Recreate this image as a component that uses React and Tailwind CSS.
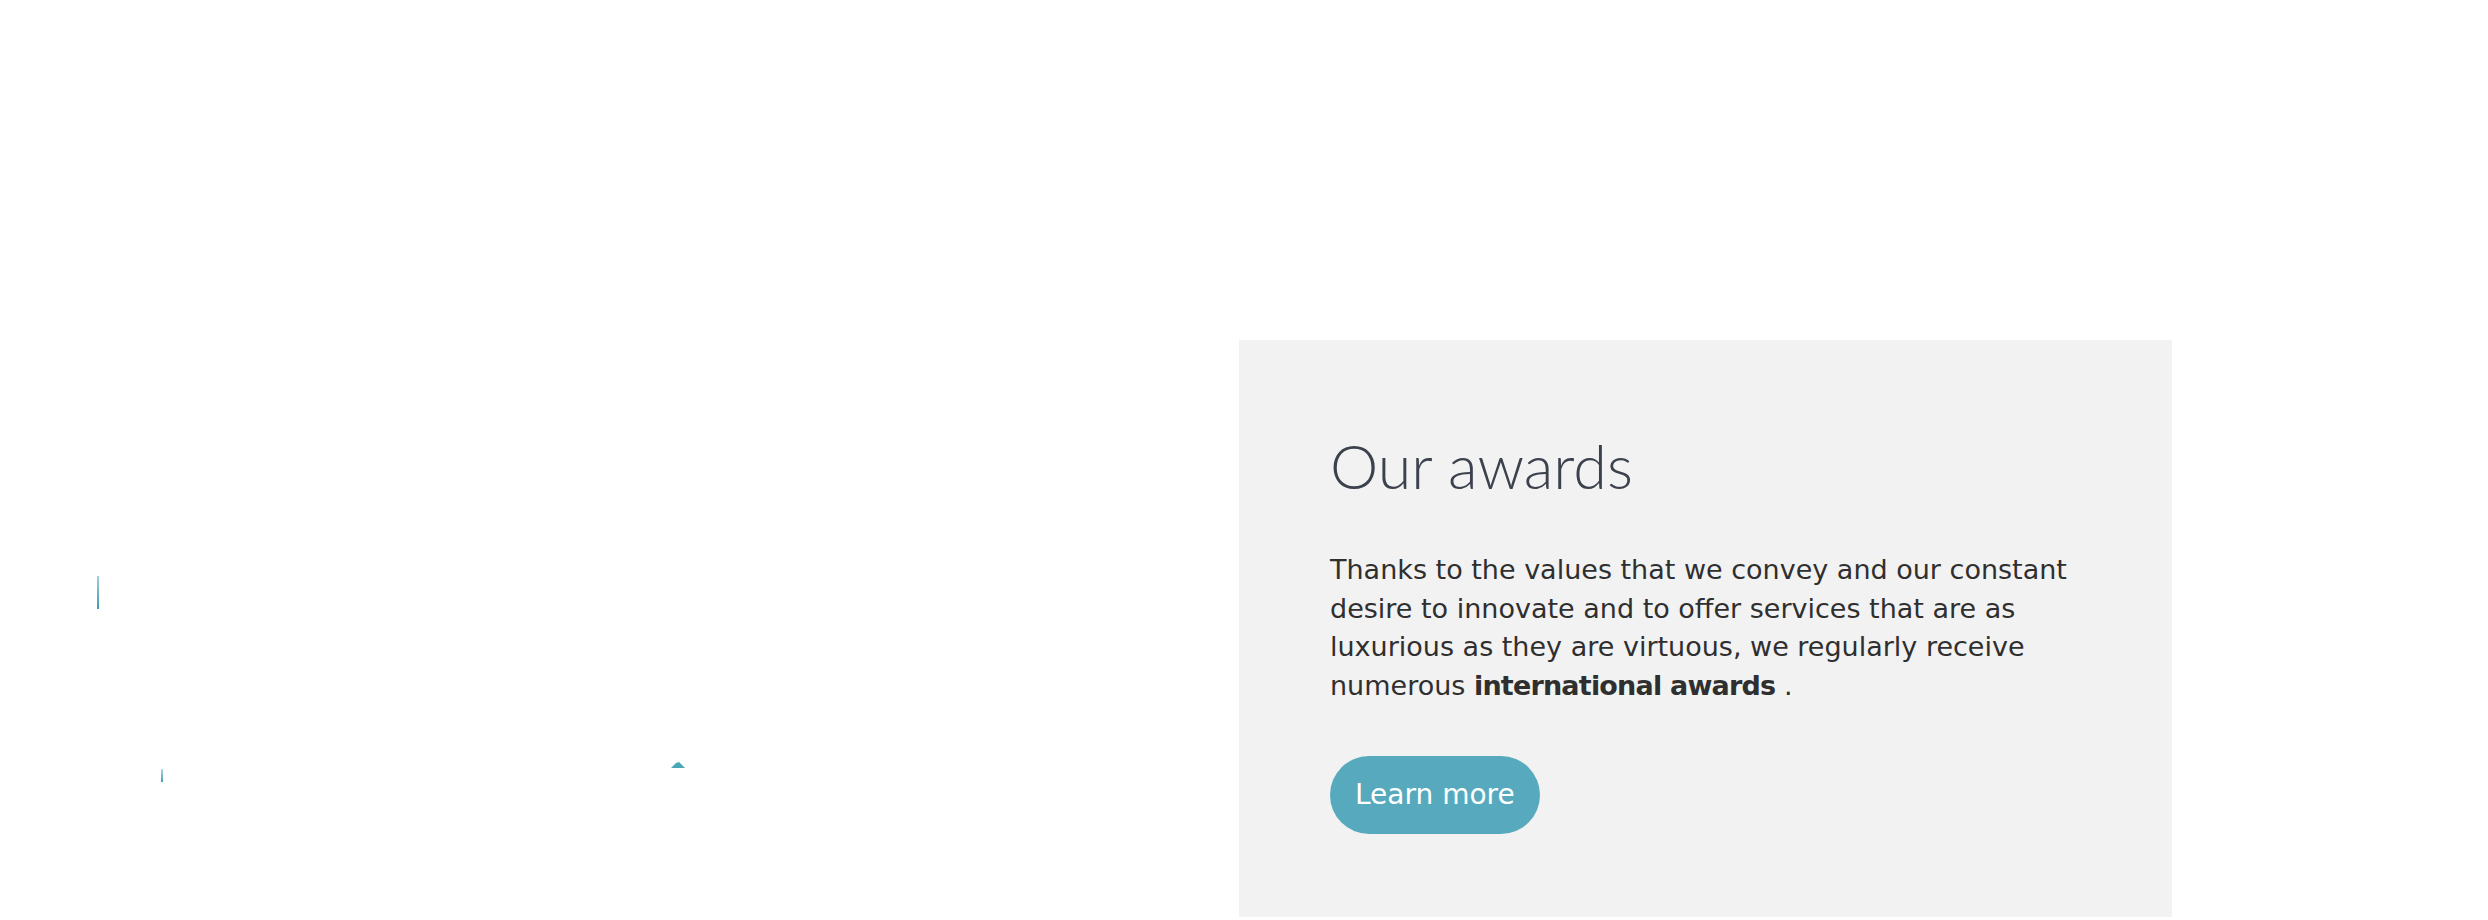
const AwardsCard = () => {
  return (
    <div className="w-[933px] h-[577px] bg-[#f2f2f2] pl-[91px] pr-[91px] pt-[89px]">
      <h2 className="font-['Lato',sans-serif] font-light text-[61px] leading-[1.2] text-[#3b414d]">
        Our awards
      </h2>
      <p className="mt-[49px] font-['DejaVu_Sans',sans-serif] text-[27px] leading-[38.5px] text-[#2f2f2f]">
        Thanks to the values that we convey and our constant desire to innovate
        and to offer services that are as luxurious as they are virtuous, we
        regularly receive numerous{" "}
        <strong className="font-bold tracking-[-0.8px]">international awards</strong> .
      </p>
      <a
        href="#"
        className="mt-[51px] inline-flex items-center h-[78px] px-[25px] rounded-full bg-[#57aabd] text-white font-['DejaVu_Sans',sans-serif] text-[28px]"
      >
        Learn more
      </a>
    </div>
  );
};

// left column: the photo has not loaded yet, only a few teal slivers show
const ImageColumn = () => {
  return (
    <div className="relative w-[1239px] h-[920px]">
      <svg className="absolute left-[96px] top-[576px]" width="4" height="33" viewBox="0 0 4 33">
        <path d="M1.5 0 L2.5 0 L3 33 L1 33 Z" fill="#3f9fb3" />
      </svg>
      <svg className="absolute left-[160px] top-[769px]" width="4" height="13" viewBox="0 0 4 13">
        <path d="M1.6 0 L2.4 0 L3 13 L1 13 Z" fill="#3f9fb3" />
      </svg>
      <svg className="absolute left-[671px] top-[762px]" width="14" height="6" viewBox="0 0 14 6">
        <path d="M0 6 L5 1 L8 0 L14 6 Z" fill="#4aa7b8" />
      </svg>
    </div>
  );
};

export default function App() {
  return (
    <div className="w-[2488px] h-[920px] bg-white flex overflow-hidden">
      <ImageColumn />
      <div className="pt-[340px]">
        <AwardsCard />
      </div>
    </div>
  );
}
